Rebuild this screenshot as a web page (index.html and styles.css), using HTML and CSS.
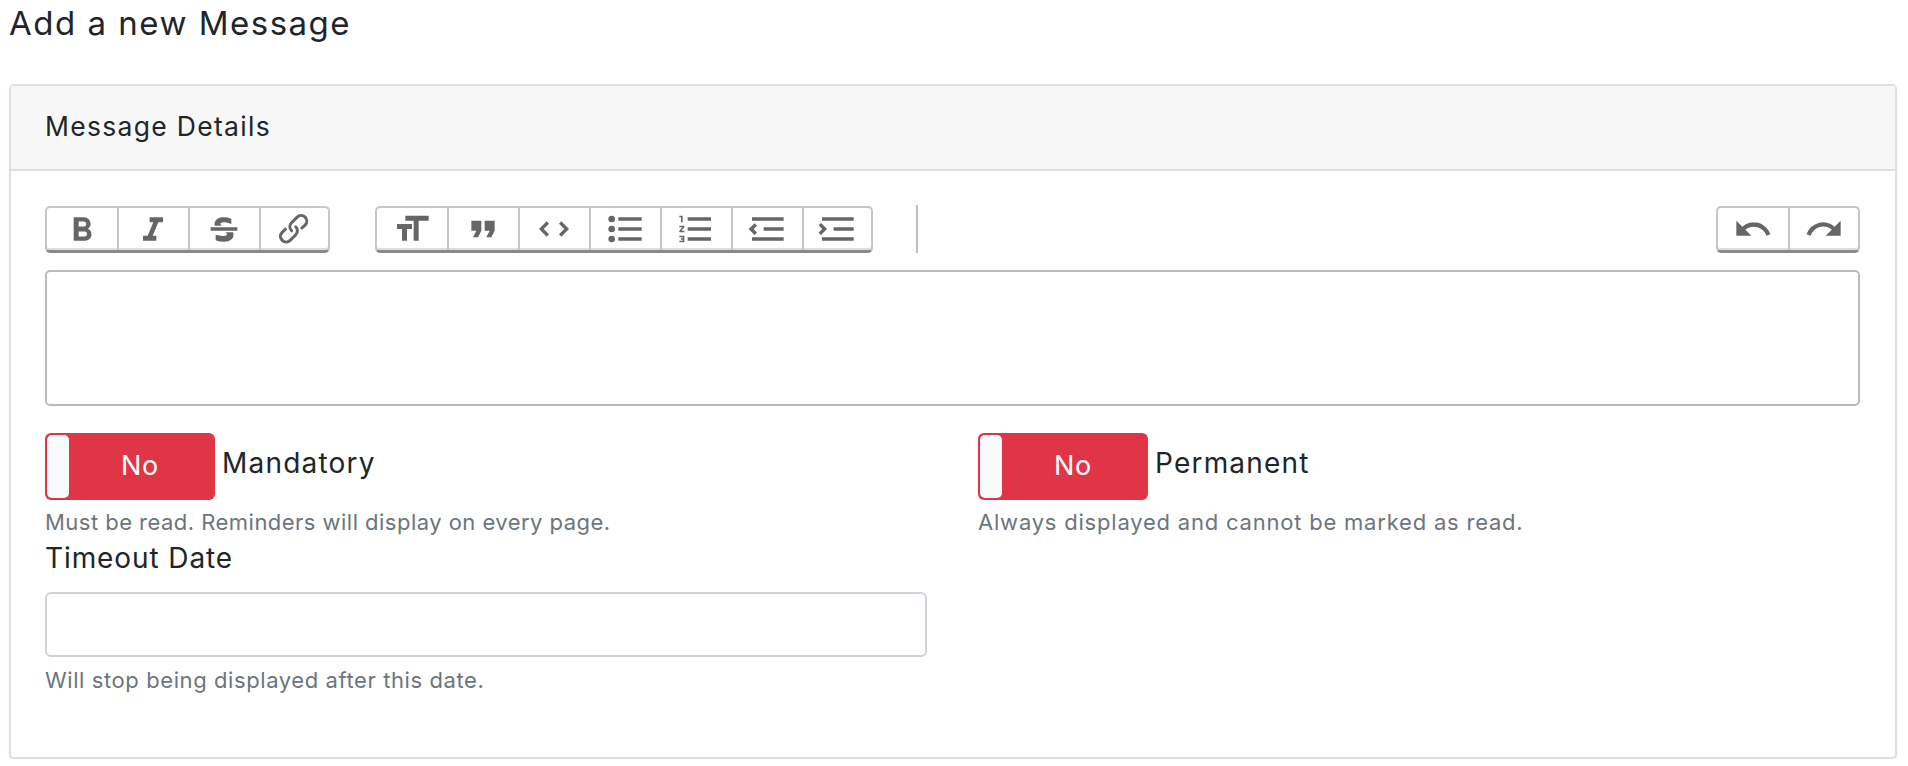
FILE: index.html
```html
<!DOCTYPE html>
<html lang="en">
<head>
<meta charset="utf-8">
<title>Add a new Message</title>
<link rel="stylesheet" href="styles.css">
</head>
<body>
<main class="page">
  <h1 class="title">Add a new Message</h1>
  <section class="card">
    <header class="card-header">Message Details</header>
    <div class="card-body">
      <div class="toolbar">
        <div class="group">
          <button class="tool"><svg viewBox="0 0 24 24"><path d="M15.6 11.8c1-.7 1.6-1.8 1.6-2.8a4 4 0 0 0-4-4H7v14h7c2.1 0 3.7-1.7 3.7-3.8 0-1.5-.8-2.8-2.1-3.4zM10 7.5h3a1.5 1.5 0 1 1 0 3h-3v-3zm3.5 9H10v-3h3.5a1.5 1.5 0 1 1 0 3z"/></svg></button>
          <button class="tool"><svg viewBox="0 0 24 24"><path d="M10 5v3h2.2l-3.4 8H6v3h8v-3h-2.2l3.4-8H18V5h-8z"/></svg></button>
          <button class="tool"><svg viewBox="0 0 24 24"><path d="M12.73 14l.28.14c.26.15.45.3.57.44.12.14.18.3.18.5 0 .3-.15.56-.44.75-.3.2-.76.3-1.39.3A13.52 13.52 0 0 1 7 15.5v3.3a14 14 0 0 0 5 .9c1.8 0 3.2-.4 4.2-1.2 1-.8 1.5-1.8 1.5-3.1 0-.5-.1-1-.3-1.4zM4 11v2h16v-2zM10.7 10c-.3-.2-.5-.3-.6-.5-.2-.2-.2-.4-.2-.6 0-.3.1-.5.4-.7.3-.2.8-.3 1.4-.3 1.3 0 2.9.4 4.7 1.1V5.8A14 14 0 0 0 11.7 5c-1.6 0-2.9.4-3.9 1.1-1 .8-1.5 1.8-1.5 3 0 .3 0 .6.1.9z"/></svg></button>
          <button class="tool"><svg viewBox="0 0 24 24"><path d="M9.88 13.7a4.3 4.3 0 0 1 0-6.07l3.37-3.37a4.26 4.26 0 0 1 6.07 0 4.3 4.3 0 0 1 0 6.06l-1.96 1.72a.91.91 0 1 1-1.3-1.3l1.97-1.71a2.46 2.46 0 0 0-3.48-3.48l-3.38 3.37a2.46 2.46 0 0 0 0 3.48.91.91 0 1 1-1.3 1.3z"/><path d="M4.25 19.46a4.3 4.3 0 0 1 0-6.07l1.93-1.9a.91.91 0 1 1 1.3 1.3l-1.93 1.9a2.46 2.46 0 0 0 3.48 3.48l3.37-3.38c.96-.96.96-2.52 0-3.48a.91.91 0 1 1 1.3-1.3 4.3 4.3 0 0 1 0 6.07l-3.38 3.38a4.26 4.26 0 0 1-6.07 0z"/></svg></button>
        </div>
        <div class="group">
          <button class="tool"><svg viewBox="0 0 24 24"><path d="M12 9v3H9v7H6v-7H3V9h9zM8 4h14v3h-6v12h-3V7H8V4z"/></svg></button>
          <button class="tool"><svg viewBox="0 0 24 24"><path d="M6 17h3l2-4V7H5v6h3zm8 0h3l2-4V7h-6v6h3z"/></svg></button>
          <button class="tool"><svg viewBox="0 0 24 24"><path d="M18.2 12L15 15.2l1.4 1.4L21 12l-4.6-4.6L15 8.8l3.2 3.2zM5.8 12L9 8.8 7.6 7.4 3 12l4.6 4.6L9 15.2 5.8 12z"/></svg></button>
          <button class="tool"><svg viewBox="0 0 24 24"><path d="M4 4a2 2 0 1 0 0 4 2 2 0 0 0 0-4zm0 6a2 2 0 1 0 0 4 2 2 0 0 0 0-4zm0 6a2 2 0 1 0 0 4 2 2 0 0 0 0-4zm4 3h14v-2H8v2zm0-6h14v-2H8v2zm0-8v2h14V5H8z"/></svg></button>
          <button class="tool"><svg viewBox="0 0 24 24"><path d="M2 17h2v.5H3v1h1v.5H2v1h3v-4H2v1zm1-9h1V4H2v1h1v3zm-1 3h1.8L2 13.1v.9h3v-1H3.2L5 10.9V10H2v1zm5-6v2h14V5H7zm0 14h14v-2H7v2zm0-6h14v-2H7v2z"/></svg></button>
          <button class="tool"><svg viewBox="0 0 24 24"><path d="M3 19h19v-2H3v2zm7-6h12v-2H10v2zm-8.3-.3l2.8 2.9L6 14.2 4 12l2-2-1.4-1.5L1 12l.7.7zM3 5v2h19V5H3z"/></svg></button>
          <button class="tool"><svg viewBox="0 0 24 24"><path d="M3 19h19v-2H3v2zm7-6h12v-2H10v2zm-6.9-1L1 14.2l1.4 1.4L6 12l-.7-.7-2.9-2.9L1 9.8 3.1 12zM3 5v2h19V5H3z"/></svg></button>
        </div>
        <div class="divider"></div>
        <div class="group group-end">
          <button class="tool"><svg viewBox="0 0 24 24"><path d="M12.5 8c-2.6 0-5 1-6.9 2.6L2 7v9h9l-3.6-3.6A8 8 0 0 1 20 16l2.4-.8a10.5 10.5 0 0 0-10-7.2z"/></svg></button>
          <button class="tool"><svg viewBox="0 0 24 24"><path d="M18.4 10.6a10.5 10.5 0 0 0-16.9 4.6L4 16a8 8 0 0 1 12.7-3.6L13 16h9V7l-3.6 3.6z"/></svg></button>
        </div>
      </div>
      <div class="editor"></div>
      <div class="options">
        <div class="option">
          <div class="switch-row">
            <div class="switch"><span class="knob"></span><span class="switch-text">No</span></div>
            <label class="label">Mandatory</label>
          </div>
          <p class="help">Must be read. Reminders will display on every page.</p>
        </div>
        <div class="option">
          <div class="switch-row">
            <div class="switch"><span class="knob"></span><span class="switch-text">No</span></div>
            <label class="label">Permanent</label>
          </div>
          <p class="help help-wide">Always displayed and cannot be marked as read.</p>
        </div>
      </div>
      <div class="timeout">
        <label class="label">Timeout Date</label>
        <input class="date-input" type="text">
        <p class="help">Will stop being displayed after this date.</p>
      </div>
    </div>
  </section>
</main>
</body>
</html>
```

FILE: styles.css
```css
* { box-sizing: border-box; }
html, body { margin: 0; background: #fff; }
body {
  font-family: "Inter", "Liberation Sans", sans-serif;
  color: #212529;
  overflow: hidden;
}
.page { padding: 0 11px 0 9px; }
.title {
  margin: 0;
  height: 84px;
  padding-top: 2px;
  font-size: 33px;
  line-height: 42px;
  font-weight: 400;
  letter-spacing: 1.5px;
}
.card {
  height: 675px;
  border: 2px solid #dfdfdf;
  border-radius: 5px;
  box-shadow: 0 2px 3px rgba(0,0,0,.06);
  background: #fff;
}
.card-header {
  height: 85px;
  padding: 0 34px 3px;
  display: flex;
  align-items: center;
  background: #f7f7f7;
  border-bottom: 2px solid #dfdfdf;
  font-size: 26.5px;
  letter-spacing: 1.3px;
}
.card-body { padding: 35px 35px 0 34px; }
.toolbar { display: flex; align-items: stretch; height: 47px; }
.group {
  display: flex;
  margin-right: 45px;
  border: 2px solid #c6c6c6;
  border-bottom-color: #8a8a8a;
  border-bottom-width: 3px;
  border-radius: 5px;
  box-shadow: inset 0 -2px 0 #ddd;
}
.group-end { margin: 0 0 0 auto; }
.tool {
  width: 71px;
  padding: 0 1px 1px 0;
  border: 0;
  border-left: 2px solid #c6c6c6;
  background: transparent;
  display: flex;
  align-items: center;
  justify-content: center;
}
.tool:first-child { border-left: 0; width: 70px; padding-right: 0; }
.tool:last-child { width: 69px; }
.group-end .tool:last-child { width: 70px; }
.tool svg { width: 40px; height: 40px; fill: #666; flex: none; }
.divider { width: 2px; background: #bdbdbd; margin: -1px 0 0 -2px; }
.editor {
  height: 136px;
  margin-top: 17px;
  border: 2px solid #bbb;
  border-radius: 5px;
}
.options { display: grid; grid-template-columns: 933px 1fr; margin-top: 27px; }
.switch-row { display: flex; align-items: flex-start; gap: 7px; }
.switch {
  width: 170px;
  height: 67px;
  border-radius: 6px;
  background: #e03546;
  padding: 2px;
  display: flex;
}
.knob { width: 22px; border-radius: 5px; background: #f8f9fa; }
.switch-text {
  flex: 1;
  text-align: center;
  color: #fff;
  font-size: 27px;
  line-height: 62px;
  letter-spacing: .8px;
  padding-right: 2px;
}
.label {
  font-size: 28px;
  line-height: 60px;
  letter-spacing: 1.2px;
  color: #212529;
}
.help {
  margin: 6px 0 0;
  font-size: 22px;
  line-height: 32px;
  letter-spacing: .47px;
  color: #6c757d;
}
.help-wide { letter-spacing: .79px; }
.timeout .label { display: block; line-height: 40px; letter-spacing: .9px; }
.date-input {
  display: block;
  width: 882px;
  height: 65px;
  margin-top: 14px;
  border: 2px solid #ced4da;
  border-radius: 6px;
  background: #fff;
}
.timeout .help { margin-top: 7px; letter-spacing: .59px; }
```
